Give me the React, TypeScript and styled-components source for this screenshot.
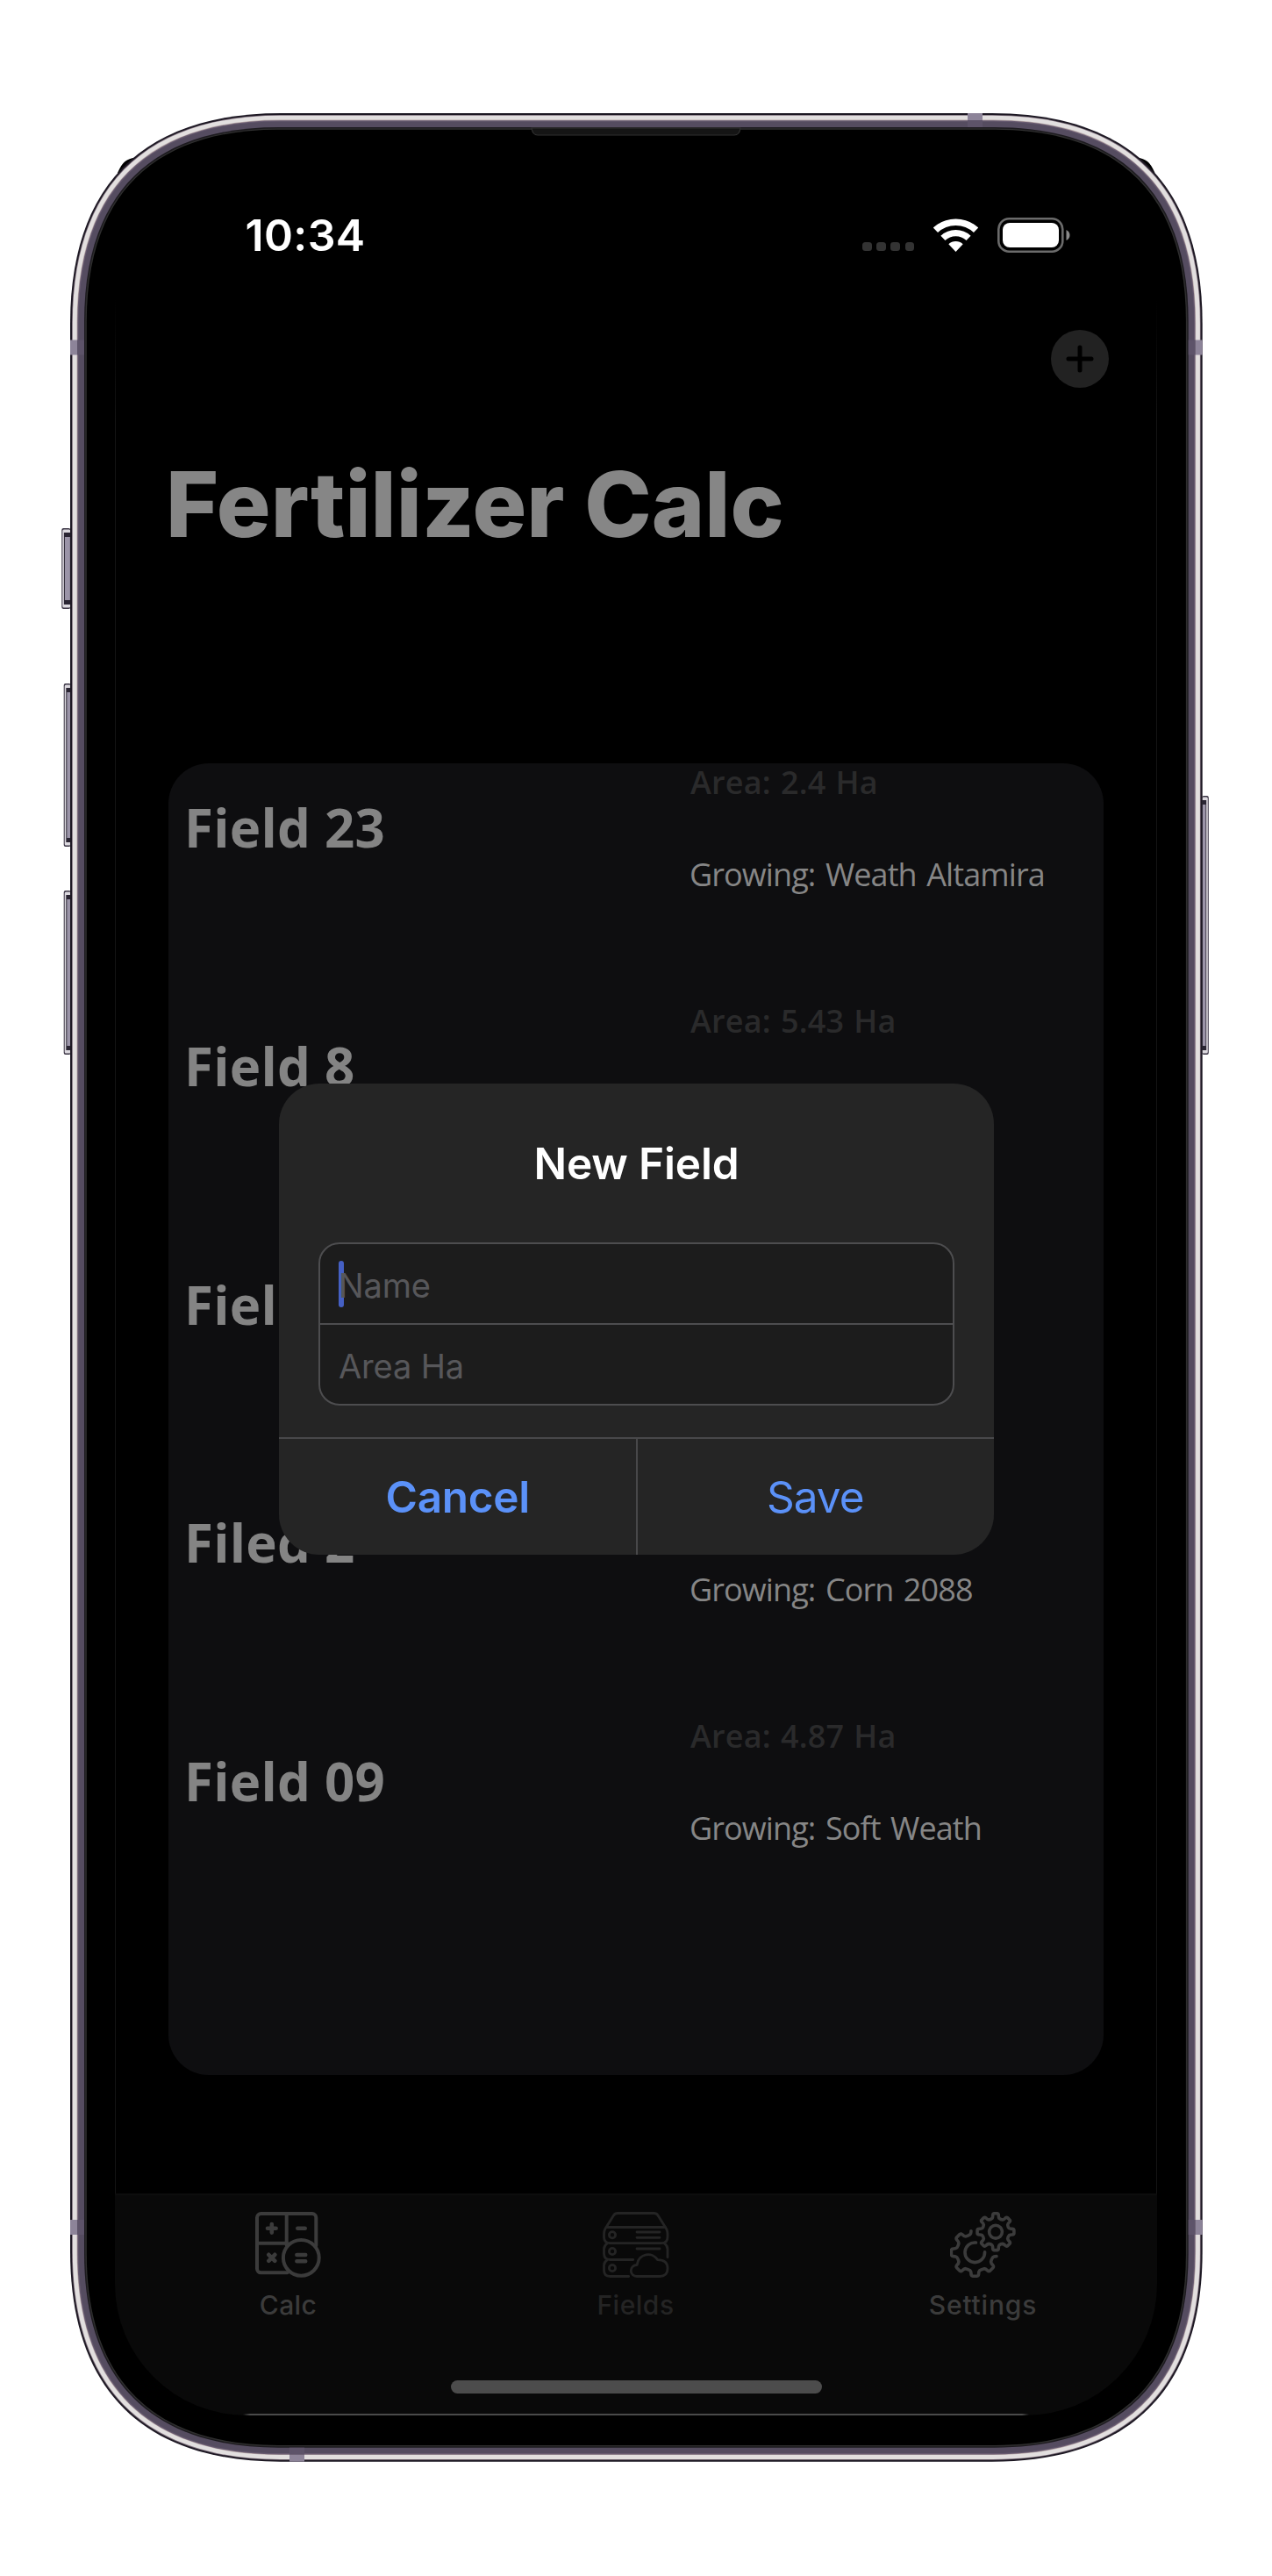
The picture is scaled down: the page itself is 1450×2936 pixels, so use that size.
import React from "react";
import styled, { createGlobalStyle } from "styled-components";

const GlobalStyle = createGlobalStyle`
  *, *::before, *::after { box-sizing: border-box; }
  body { margin: 0; background: #fff; }
`;

const ui = `Inter, "Liberation Sans", sans-serif`;
const humanist = `"Open Sans", "Noto Sans", sans-serif`;

const Page = styled.div`
  position: relative;
  width: 1450px;
  height: 2936px;
  padding: 148px 131px 183px;
  background: #fff;
  font-family: ${ui};
  overflow: hidden;
`;

const Hardware = styled.svg`
  position: absolute;
  inset: 0;
  width: 1450px;
  height: 2936px;
`;

const Screen = styled.main`
  position: relative;
  display: flex;
  flex-direction: column;
  width: 1188px;
  height: 2605px;
`;

const StatusBar = styled.header`
  display: flex;
  align-items: center;
  justify-content: space-between;
  height: 60px;
  margin-top: 90px;
  padding: 0 99px 0 148.5px;
`;

const Clock = styled.time`
  font-size: 50px;
  font-weight: 600;
  line-height: 60px;
  letter-spacing: 0.36px;
  color: #fff;
`;

const StatusIcons = styled.div`
  display: flex;
  align-items: center;
  gap: 22px;
`;

const CellularDots = styled.div`
  display: flex;
  gap: 5.6px;
  margin-top: 26px;
`;

const Dot = styled.i`
  width: 10.5px;
  height: 10.5px;
  border-radius: 3.5px;
  background: #333;
`;

const NavBar = styled.nav`
  display: flex;
  justify-content: flex-end;
  margin-top: 78px;
  padding-right: 55px;
`;

const AddButton = styled.button`
  display: flex;
  width: 66px;
  height: 66px;
  padding: 0;
  border: 0;
  border-radius: 50%;
  background: #222;
`;

const Title = styled.h1`
  margin: 70px 0 0 58px;
  font-size: 103px;
  font-weight: 800;
  line-height: 125px;
  letter-spacing: 0;
  color: #868686;
  white-space: nowrap;
`;

const FieldCard = styled.section`
  display: flex;
  flex-direction: column;
  gap: 125.75px;
  width: 1066px;
  height: 1495px;
  margin: 233px 0 0 61px;
  border-radius: 46px;
  background: #0e0e10;
`;

const FieldRow = styled.article`
  display: grid;
  grid-template-columns: 577px 1fr;
  align-items: center;
  height: 146px;
  padding-left: 18px;
  font-family: ${humanist};
  white-space: nowrap;
`;

const FieldName = styled.h2`
  margin: 0;
  font-size: 60px;
  font-weight: 700;
  line-height: 60px;
  letter-spacing: 0.25px;
  color: #848484;
`;

const FieldDetails = styled.div`
  display: grid;
  grid-template-rows: 41px 41px;
  row-gap: 64px;
  height: 144px;
  font-size: 36px;
  line-height: 41px;
`;

const Area = styled.span`
  font-weight: 600;
  letter-spacing: 0.2px;
  word-spacing: 1.5px;
  color: #2a2a2b;
`;

const Growing = styled.span`
  grid-row: 2;
  margin-left: -1px;
  letter-spacing: -0.9px;
  word-spacing: 3px;
  color: #868686;
`;

const TabBar = styled.footer`
  display: flex;
  flex-direction: column;
  align-items: center;
  height: 253px;
  margin-top: auto;
  padding-top: 19px;
  border-top: 2px solid #0d0d0d;
  border-radius: 0 0 150px 150px;
  background:
    linear-gradient(90deg, transparent, #4a4a4a 8px calc(100% - 8px), transparent) center bottom / 896px 2px no-repeat,
    #090909;
`;

const Tabs = styled.div`
  display: grid;
  grid-template-columns: repeat(3, 1fr);
  width: 100%;
`;

const Tab = styled.a<{ $active?: boolean }>`
  display: flex;
  flex-direction: column;
  align-items: center;
  gap: 11.5px;
  padding-right: 1px;
  color: ${(p) => (p.$active ? "#242424" : "#3b3b3b")};
`;

const TabLabel = styled.span<{ $spacing: number }>`
  font-size: 30px;
  font-weight: 500;
  line-height: 36px;
  letter-spacing: ${(p) => p.$spacing}px;
`;

const HomeIndicator = styled.div`
  width: 423px;
  height: 15px;
  margin-top: 68px;
  border-radius: 8px;
  background: #4c4c4c;
`;

const Dialog = styled.div`
  position: absolute;
  top: 1087px;
  left: 187px;
  display: flex;
  flex-direction: column;
  width: 815px;
  height: 537px;
  border-radius: 46px;
  background: #252525;
  overflow: hidden;
`;

const DialogTitle = styled.h3`
  margin: 61px 0 0;
  font-size: 49.5px;
  font-weight: 600;
  line-height: 60px;
  letter-spacing: -0.15px;
  text-align: center;
  color: #fff;
`;

const Inputs = styled.div`
  display: flex;
  flex-direction: column;
  width: 725px;
  height: 186px;
  margin: 60px auto 0;
  border: 2px solid #4d4d4f;
  border-radius: 24px;
  background: #1c1c1c;
`;

const Input = styled.div`
  display: flex;
  align-items: center;
  flex: 1;
  padding: 3px 0 0 21px;
  font-size: 38px;
  letter-spacing: -0.15px;
  color: #57575a;

  & + & {
    border-top: 2px solid #4d4d4f;
  }
`;

const Caret = styled.i`
  width: 6px;
  height: 53px;
  margin: -3px -6px 0 0;
  border-radius: 3px;
  background: #4560c4;
`;

const Actions = styled.div`
  display: grid;
  grid-template-columns: 1fr 1fr;
  height: 134px;
  margin-top: auto;
  border-top: 2px solid #48484a;
`;

const Action = styled.button<{ $bold?: boolean }>`
  padding: 0;
  border: 0;
  background: none;
  font-family: ${ui};
  font-size: 49.5px;
  font-weight: ${(p) => (p.$bold ? 600 : 400)};
  letter-spacing: ${(p) => (p.$bold ? -0.3 : -1)}px;
  color: #5b91f8;

  & + & {
    margin-left: -1px;
    padding-right: 1px;
    border-left: 2px solid #48484a;
  }
`;

/* Rounded outline with the smoothed corners of the handset body, inset by d. */
const bodyPath = (d: number) => {
  const l = 80 + d, t = 129 + d, r = 1370.7 - d, b = 2805.7 - d;
  const R = 240 - 1.15 * d;
  const c = R * 0.344;
  return `M${l + R} ${t}H${r - R}C${r - c} ${t} ${r} ${t + c} ${r} ${t + R}V${b - R}C${r} ${b - c} ${r - c} ${b} ${r - R} ${b}H${l + R}C${l + c} ${b} ${l} ${b - c} ${l} ${b - R}V${t + R}C${l} ${t + c} ${l + c} ${t} ${l + R} ${t}Z`;
};

const shells: [number, string][] = [
  [0, "#1d1823"],
  [2, "#7d6f7c"],
  [2.8, "#e2dfdf"],
  [7.6, "#b5a6a6"],
  [8.3, "#675a70"],
  [9.6, "#554c60"],
  [16, "#1c1a1e"],
  [17.4, "#2f2f2f"],
  [18.8, "#000"],
];

function SideKey({ x, y, w, h, right }: { x: number; y: number; w: number; h: number; right?: boolean }) {
  const ix = right ? x : x + 2.6;
  return (
    <g>
      <rect x={x} y={y} width={w} height={h} rx="2" fill="#3a3444" />
      <rect x={x + (right ? 0 : 1)} y={y + 1.5} width={w - 1} height={h - 3} rx="1.5" fill="#dcd9df" />
      <rect x={ix} y={y + 5} width={w - 2.6} height={h - 10} fill="#2a2533" />
      <rect x={ix + (right ? 0.6 : 1)} y={y + 10} width={w - 4} height={h - 20} fill="#9b94a8" />
    </g>
  );
}

function Handset() {
  return (
    <Hardware viewBox="0 0 1450 2936" aria-hidden="true">
      <defs>
        <linearGradient id="edge" x1="0" y1="340" x2="0" y2="480" gradientUnits="userSpaceOnUse">
          <stop offset="0" stopColor="#000" />
          <stop offset="1" stopColor="#141414" />
        </linearGradient>
      </defs>
      <path d="M134 197Q138.5 187 142.5 184Q147 180.5 154 179.5L160 190L142 205Z" fill="#000" />
      <path d="M1316.5 197Q1312 187 1308 184Q1303.5 180.5 1296.5 179.5L1290 190L1308 205Z" fill="#000" />
      <SideKey x={70.3} y={602} w={10} h={92} />
      <SideKey x={72.7} y={779} w={8} h={186} />
      <SideKey x={72.7} y={1015} w={8} h={187} />
      <SideKey x={1370.2} y={907} w={7.6} h={295} right />
      {shells.map(([d, fill]) => (
        <path key={d} d={bodyPath(d)} fill={fill} />
      ))}
      <g fill="#8d8499">
        <rect x="80" y="387.5" width="8" height="17" />
        <rect x="80" y="2530" width="8" height="17" />
        <rect x="1362.7" y="387.5" width="8" height="17" />
        <rect x="1362.7" y="2530" width="8" height="17" />
        <rect x="1103" y="129" width="17" height="8" />
        <rect x="330" y="2797.7" width="17" height="8" />
      </g>
      <g fill="#5d5369">
        <rect x="88" y="387.5" width="8" height="17" />
        <rect x="88" y="2530" width="8" height="17" />
        <rect x="1354.7" y="387.5" width="8" height="17" />
        <rect x="1354.7" y="2530" width="8" height="17" />
        <rect x="1103" y="137" width="17" height="8" />
        <rect x="330" y="2789.7" width="17" height="8" />
      </g>
      <path d="M606 146H844Q843 154 837 154H613Q607 154 606 146Z" fill="#151515" stroke="#303030" strokeWidth="1.2" />
      <rect x="131" y="340" width="1" height="2260" fill="url(#edge)" />
      <rect x="1318" y="340" width="1" height="2260" fill="url(#edge)" />
    </Hardware>
  );
}

/* Arc of the given radius around (25.5, 38), spanning ±43° about straight up. */
const fan = (r: number) => {
  const s = Math.sin(0.75) * r, k = Math.cos(0.75) * r;
  return `M${25.5 - s} ${38 - k}A${r} ${r} 0 0 1 ${25.5 + s} ${38 - k}`;
};

function WifiIcon() {
  return (
    <svg width="51" height="38" viewBox="0 0 51 38" fill="none" stroke="#fff">
      <path d={fan(33.8)} strokeWidth="7.6" />
      <path d={fan(21.4)} strokeWidth="7.4" />
      <path d={`${fan(12)}L25.5 38Z`} fill="#fff" stroke="none" />
    </svg>
  );
}

function BatteryIcon() {
  return (
    <svg width="83" height="40" viewBox="0 0 83 40">
      <rect x="1.3" y="1.3" width="73" height="37.4" rx="12" fill="none" stroke="#6b6b6b" strokeWidth="2.6" />
      <rect x="6" y="6" width="64" height="28" rx="8" fill="#fff" />
      <path d="M78.5 14Q82.5 16 82.5 20T78.5 26Z" fill="#8a8a8a" />
    </svg>
  );
}

function PlusIcon() {
  return (
    <svg width="66" height="66" viewBox="0 0 66 66" stroke="#000" strokeWidth="5" strokeLinecap="round">
      <path d="M33 20V46M20 33H46" />
    </svg>
  );
}

function CalcIcon() {
  return (
    <svg width="76" height="76" viewBox="0 0 76 76" fill="none" stroke="currentColor" strokeWidth="4" strokeLinecap="round">
      <path d="M36.5 69.3H6.5A4.5 4.5 0 0 1 2 64.8V6.5A4.5 4.5 0 0 1 6.5 2H64.8A4.5 4.5 0 0 1 69.3 6.5V38.5M35.7 2V38M2 35.7H36.5" />
      <circle cx="52.3" cy="52.3" r="20.4" />
      <path strokeWidth="4.6" d="M14 18.8H23.6M18.8 14V23.6M48.3 18.8H56.7M15.3 48.8L22.3 55.8M22.3 48.8L15.3 55.8M47.4 49H57.2M47.4 56.3H57.2" />
    </svg>
  );
}

function ServerIcon() {
  return (
    <svg width="76" height="76" viewBox="0 0 76 76" fill="none" stroke="currentColor" strokeWidth="2.8" strokeLinecap="round" strokeLinejoin="round">
      <path d="M4 17.5L12.5 4Q14 1.5 17 1.5H58.5Q61.5 1.5 63 4L71.5 17.5" />
      <path d="M4 17.5H71.5Q74 21 74 25V28.5Q74 35.7 67 35.7H8.5Q1.5 35.7 1.5 28.5V25Q1.5 21 4 17.5" />
      <path d="M5 36.2Q1.5 38.5 1.5 42.5V47.5Q1.5 54.5 8.5 54.5H34.7M70.5 36.2Q74 38.5 74 42.5V51.7" />
      <path d="M5 55Q1.5 57.2 1.5 61V66.5Q1.5 73.5 8.5 73.5H29.7" />
      <path d="M39 73.5A6.5 6.5 0 0 1 38.5 60.5Q39.5 60.5 39.5 59A12.5 12.5 0 0 1 62.5 54.6Q74 54.6 74 64.2T64.5 73.5Z" />
      <circle cx="11" cy="26.3" r="3.6" />
      <circle cx="11" cy="45" r="3.6" />
      <circle cx="11" cy="64" r="3.6" />
      <path d="M39 23H65M39 29.3H65M39 42H65" />
    </svg>
  );
}

const polar = (cx: number, cy: number, r: number, deg: number) => {
  const a = (deg * Math.PI) / 180;
  return `${(cx + r * Math.cos(a)).toFixed(2)} ${(cy + r * Math.sin(a)).toFixed(2)}`;
};

/* Gear outline running clockwise over the given tooth angles. */
const gear = (cx: number, cy: number, R: number, r: number, teeth: number[]) =>
  teeth
    .map((a, i) => {
      const p = (rad: number, off: number) => polar(cx, cy, rad, a + off);
      return `${i ? "L" : "M"}${p(r, -15)}Q${p(r + 1, -11)} ${p(R - 2, -10)}Q${p(R, -9)} ${p(R, -5)}L${p(R, 5)}Q${p(R, 9)} ${p(R - 2, 10)}Q${p(r + 1, 11)} ${p(r, 15)}Q${p(r - 0.8, 22.5)} ${p(r, 30)}`;
    })
    .join("");

function GearsIcon() {
  const lx = 28.3, ly = 46.3, R = 27, r = 21.2;
  const p = (rad: number, deg: number) => polar(lx, ly, rad, deg);
  return (
    <svg width="76" height="76" viewBox="0 0 76 76" fill="none" stroke="currentColor" strokeWidth="3.6" strokeLinecap="round" strokeLinejoin="round">
      <path d={`${gear(52, 22.7, 21, 15.8, [0, 45, 90, 135, 180, 225, 270, 315])}Z`} />
      <circle cx="52" cy="22.7" r="7.4" />
      <path d={`M${p(R - 2, 10)}Q${p(r + 1, 11)} ${p(r, 15)}Q${p(r - 0.8, 22.5)} ${p(r, 30)}${gear(lx, ly, R, r, [45, 90, 135, 180, 225]).replace("M", "L")}Q${p(r + 1, 259)} ${p(R - 2, 260)}`} />
      <path d={`M${p(11.3, -84)}A11.3 11.3 0 1 0 ${p(11.3, -3)}`} />
    </svg>
  );
}

const fields: { name: string; area?: string; growing?: string }[] = [
  { name: "Field 23", area: "2.4 Ha", growing: "Weath Altamira" },
  { name: "Field 8", area: "5.43 Ha" },
  { name: "Fiel" },
  { name: "Filed 2", growing: "Corn 2088" },
  { name: "Field 09", area: "4.87 Ha", growing: "Soft Weath" },
];

export default function App() {
  return (
    <Page>
      <GlobalStyle />
      <Handset />
      <Screen>
        <StatusBar>
          <Clock>10:34</Clock>
          <StatusIcons>
            <CellularDots>
              <Dot /><Dot /><Dot /><Dot />
            </CellularDots>
            <WifiIcon />
            <BatteryIcon />
          </StatusIcons>
        </StatusBar>
        <NavBar>
          <AddButton aria-label="Add field">
            <PlusIcon />
          </AddButton>
        </NavBar>
        <Title>Fertilizer Calc</Title>
        <FieldCard>
          {fields.map((f) => (
            <FieldRow key={f.name}>
              <FieldName>{f.name}</FieldName>
              <FieldDetails>
                {f.area && <Area>Area: {f.area}</Area>}
                {f.growing && <Growing>Growing: {f.growing}</Growing>}
              </FieldDetails>
            </FieldRow>
          ))}
        </FieldCard>
        <TabBar>
          <Tabs>
            <Tab>
              <CalcIcon />
              <TabLabel $spacing={0.4}>Calc</TabLabel>
            </Tab>
            <Tab $active>
              <ServerIcon />
              <TabLabel $spacing={0.5}>Fields</TabLabel>
            </Tab>
            <Tab>
              <GearsIcon />
              <TabLabel $spacing={0.8}>Settings</TabLabel>
            </Tab>
          </Tabs>
          <HomeIndicator />
        </TabBar>
        <Dialog role="dialog">
          <DialogTitle>New Field</DialogTitle>
          <Inputs>
            <Input><Caret />Name</Input>
            <Input>Area Ha</Input>
          </Inputs>
          <Actions>
            <Action $bold>Cancel</Action>
            <Action>Save</Action>
          </Actions>
        </Dialog>
      </Screen>
    </Page>
  );
}
